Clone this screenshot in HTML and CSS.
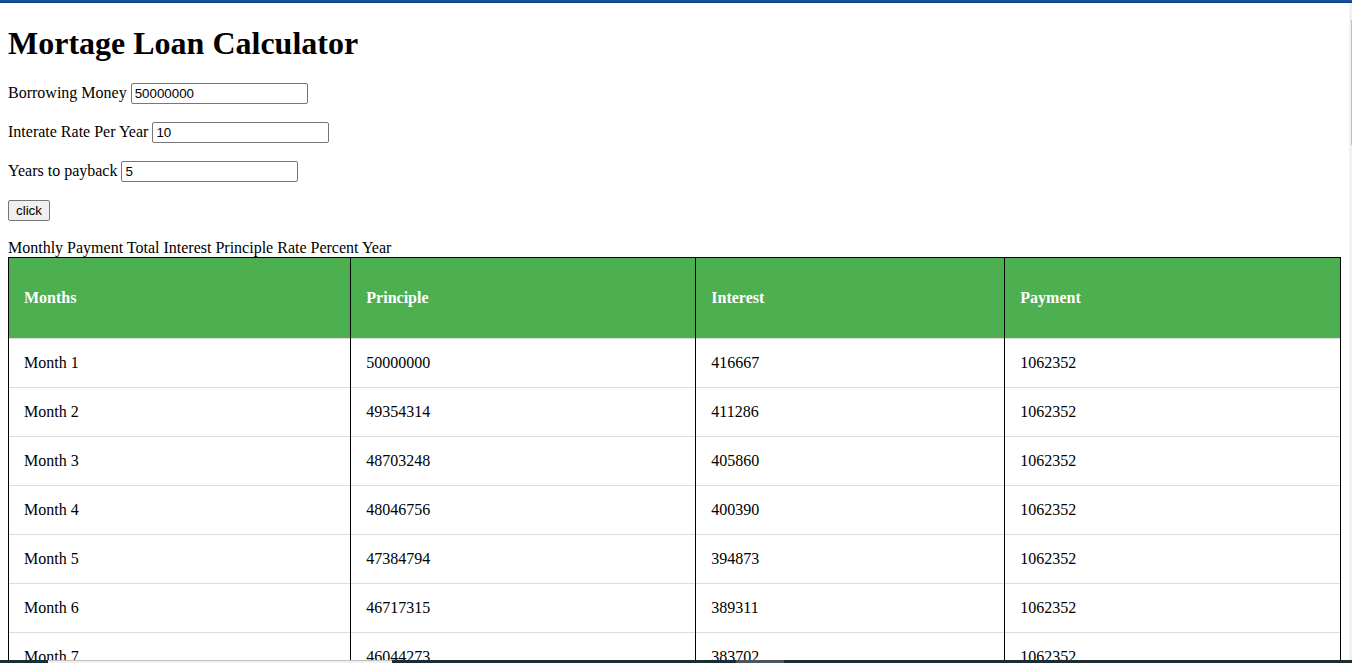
FILE: index.html
```html
<!DOCTYPE html>
<html lang="en">
<head>
<meta charset="utf-8">
<title>Mortage Loan Calculator</title>
<link rel="stylesheet" href="styles.css">
</head>
<body>
<div class="window">
  <div class="window-top"></div>
  <div class="viewport">
    <main class="page">
      <h1 class="title">Mortage Loan Calculator</h1>
      <form class="form">
        <div class="field"><label for="amount">Borrowing Money</label> <input class="text-input" id="amount" type="text" value="50000000"></div>
        <div class="field"><label for="rate">Interate Rate Per Year</label> <input class="text-input" id="rate" type="text" value="10"></div>
        <div class="field"><label for="years">Years to payback</label> <input class="text-input" id="years" type="text" value="5"></div>
        <div class="field"><button class="button" type="button">click</button></div>
      </form>
      <div class="summary">Monthly Payment Total Interest Principle Rate Percent Year</div>
      <table class="schedule">
        <colgroup><col class="col-month"><col class="col-principle"><col class="col-interest"><col class="col-payment"></colgroup>
        <thead>
          <tr><th>Months</th><th>Principle</th><th>Interest</th><th>Payment</th></tr>
        </thead>
        <tbody>
          <tr><td>Month 1</td><td>50000000</td><td>416667</td><td>1062352</td></tr>
          <tr><td>Month 2</td><td>49354314</td><td>411286</td><td>1062352</td></tr>
          <tr><td>Month 3</td><td>48703248</td><td>405860</td><td>1062352</td></tr>
          <tr><td>Month 4</td><td>48046756</td><td>400390</td><td>1062352</td></tr>
          <tr><td>Month 5</td><td>47384794</td><td>394873</td><td>1062352</td></tr>
          <tr><td>Month 6</td><td>46717315</td><td>389311</td><td>1062352</td></tr>
          <tr><td>Month 7</td><td>46044273</td><td>383702</td><td>1062352</td></tr>
        </tbody>
      </table>
    </main>
    <div class="scroll-track"><div class="scroll-thumb"></div></div>
  </div>
  <div class="window-bottom">
    <div class="task-start"></div>
    <div class="task-search"></div>
    <div class="task-items"><div class="task-active"></div></div>
  </div>
</div>
</body>
</html>
```

FILE: styles.css
```css
* {
  box-sizing: border-box;
}

body {
  margin: 0;
  background: #fff;
  color: #000;
  font-family: "Liberation Serif", "Times New Roman", serif;
  font-size: 16px;
  line-height: 18px;
}

.window {
  display: flex;
  flex-direction: column;
  height: 100vh;
}

.window-top {
  flex: none;
  height: 3px;
  background: #15529b;
  border-bottom: 1px solid #0d3d78;
}

.viewport {
  display: flex;
  flex: 1;
  min-height: 0;
}

.page {
  flex: 1;
  overflow: hidden;
  padding: 0 8px;
}

.title {
  margin: 22px 0 21px;
  font-size: 32px;
  line-height: 37px;
}

.field {
  height: 21px;
  margin-bottom: 18px;
  line-height: 20px;
}

.text-input {
  width: 177px;
  height: 21px;
  padding: 1px 3px;
  border: 1px solid #767676;
  border-radius: 2px;
  background: #fff;
  color: #000;
  font-family: "Liberation Sans", Arial, sans-serif;
  vertical-align: top;
}

.button {
  display: block;
  width: 42px;
  height: 21px;
  padding: 0;
  border: 1px solid #767676;
  border-radius: 2px;
  background: #efefef;
  color: #000;
  font-family: "Liberation Sans", Arial, sans-serif;
}

.schedule {
  width: 100%;
  table-layout: fixed;
  border-collapse: collapse;
  border: 1px solid #000;
}

.col-month {
  width: 25.7%;
}

.col-principle {
  width: 25.9%;
}

.col-interest {
  width: 23.2%;
}

.schedule th,
.schedule td {
  padding: 15px 15px 16px;
  border-right: 1px solid #000;
  box-shadow: inset 0 -1px #ddd;
  text-align: left;
}

.schedule th {
  height: 81px;
  background: #4caf50;
  color: #fff;
}

.scroll-track {
  flex: none;
  width: 3px;
  padding: 17px 0 0 2px;
  background: #f1f1f1;
}

.scroll-thumb {
  height: 125px;
  background: #c1c1c1;
}

.window-bottom {
  display: flex;
  flex: none;
  height: 3px;
  background: #1b2c35;
}

.task-start {
  width: 48px;
}

.task-search {
  width: 344px;
  border-top: 1px solid #c1c1c1;
  background: #f1f1f1;
}

.task-items {
  flex: 1;
  padding-left: 344px;
}

.task-active {
  width: 48px;
  height: 3px;
  background: #4a575e;
}
```
